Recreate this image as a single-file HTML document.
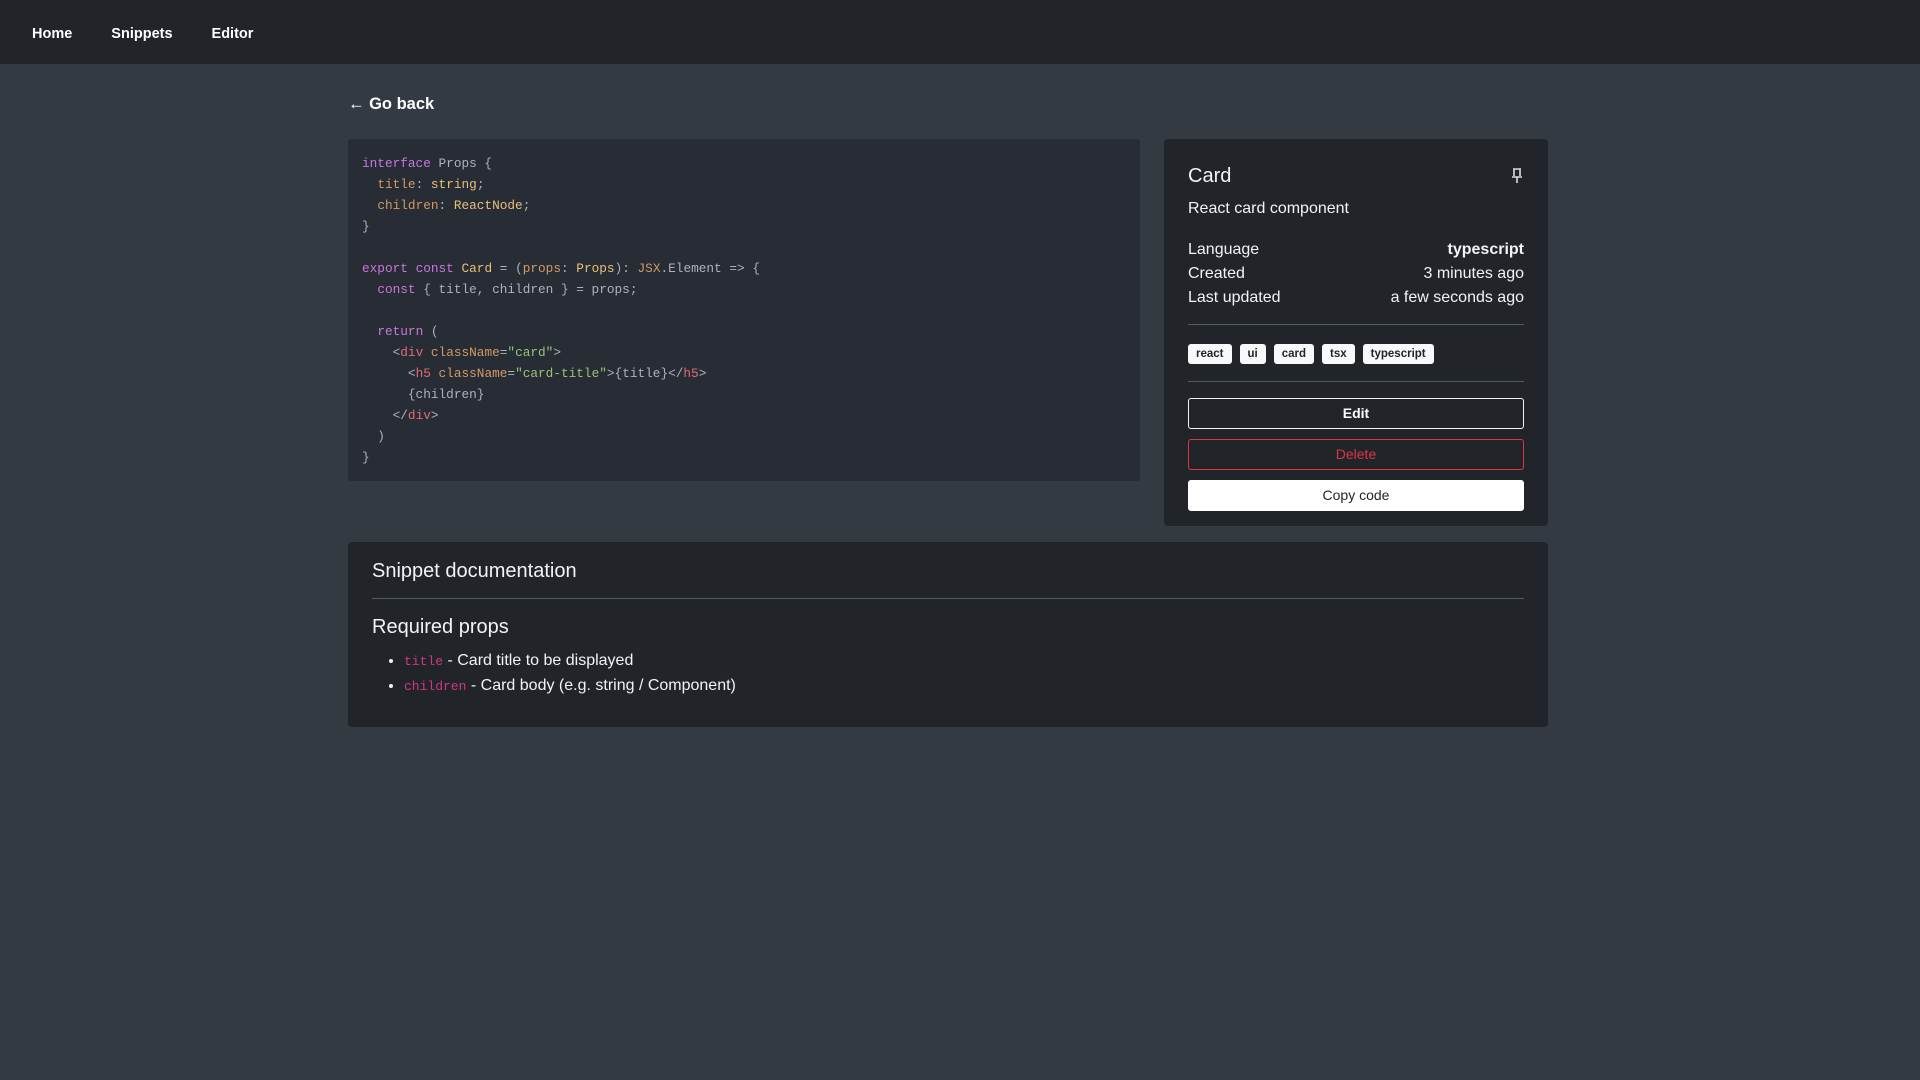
<!DOCTYPE html>
<html><head><meta charset="utf-8"><style>
*{box-sizing:border-box;margin:0;padding:0}
body{width:1920px;height:1080px;background:#343a42;font-family:"Liberation Sans",sans-serif;color:#f1f3f5;overflow:hidden}
nav{height:64px;background:#212529;display:flex;align-items:center;padding-left:32px;padding-top:4px}
nav a{color:#fff;font-weight:bold;font-size:14.5px;margin-right:39px;text-decoration:none}
.back{position:absolute;left:348px;top:95px;font-size:16.5px;font-weight:bold;color:#fff}
.code{position:absolute;left:348px;top:139px;width:792px;height:342px;background:#282c34;border-radius:3px;padding:14px 14px;font-family:"Liberation Mono",monospace;font-size:12.75px;line-height:21px;color:#abb2bf;white-space:pre}
.k{color:#c678dd}.y{color:#e5c07b}.o{color:#d19a66}.r{color:#e06c75}.g{color:#98c379}.c{color:#56b6c2}
.side{position:absolute;left:1164px;top:139px;width:384px;height:387px;background:#212529;border-radius:4px;padding:24px}
.side h2{font-size:20px;font-weight:normal;margin-top:1px;line-height:24px}
.sub{font-size:16px;margin-top:12px}
.row{display:flex;justify-content:space-between;font-size:16px;line-height:24px}
hr{border:0;border-top:1px solid #555a60}
.tags{display:flex;gap:8px;margin:19px 0 17px}
.tag{background:#f8f9fa;color:#212529;font-size:11.5px;font-weight:bold;border-radius:3px;padding:0 8px;height:20px;line-height:20px}
.btn{height:31px;border-radius:3px;text-align:center;line-height:29px;font-size:14px;margin-top:10px}
.doc{position:absolute;left:348px;top:542px;width:1200px;height:185px;background:#212529;border-radius:4px;padding:16px 24px}
.doc h2{font-size:20px;font-weight:normal;line-height:26px}
.doc h3{font-size:20px;font-weight:normal;margin-top:15px;line-height:26px}
.doc ul{margin-top:9px;padding-left:32px;font-size:16px;line-height:24px}
.doc code{font-family:"Liberation Mono",monospace;color:#d63384;font-size:13px}
</style></head><body>
<nav><a>Home</a><a>Snippets</a><a>Editor</a></nav>
<div class="back">← Go back</div>
<div class="code"><span class="k">interface</span> Props {
  <span class="o">title</span>: <span class="y">string</span>;
  <span class="o">children</span>: <span class="y">ReactNode</span>;
}

<span class="k">export</span> <span class="k">const</span> <span class="y">Card</span> = (<span class="o">props</span>: <span class="y">Props</span>): <span class="o">JSX</span>.Element =&gt; {
  <span class="k">const</span> { title, children } = props;

  <span class="k">return</span> (
    &lt;<span class="r">div</span> <span class="o">className</span>=<span class="g">"card"</span>&gt;
      &lt;<span class="r">h5</span> <span class="o">className</span>=<span class="g">"card-title"</span>&gt;{title}&lt;/<span class="r">h5</span>&gt;
      {children}
    &lt;/<span class="r">div</span>&gt;
  )
}</div>
<div class="side">
<div style="display:flex;justify-content:space-between"><h2>Card</h2>
<svg width="14" height="18" viewBox="0 0 14 18" style="margin-top:4px"><path d="M3 2h8M4 2v7M10 2v7M2 10h10M7 10v6" stroke="#ddd" stroke-width="1.6" fill="none"/></svg></div>
<div class="sub">React card component</div>
<div style="margin-top:20px">
<div class="row"><span>Language</span><b>typescript</b></div>
<div class="row"><span>Created</span><span>3 minutes ago</span></div>
<div class="row"><span>Last updated</span><span>a few seconds ago</span></div>
</div>
<hr style="margin-top:14px">
<div class="tags"><span class="tag">react</span><span class="tag">ui</span><span class="tag">card</span><span class="tag">tsx</span><span class="tag">typescript</span></div>
<hr>
<div class="btn" style="border:1px solid #f1f3f5;color:#fff;font-weight:bold;margin-top:16px">Edit</div>
<div class="btn" style="border:1px solid #dc3545;color:#dc3545">Delete</div>
<div class="btn" style="background:#fff;color:#212529;border:1px solid #fff">Copy code</div>
</div>
<div class="doc">
<h2>Snippet documentation</h2>
<hr style="margin-top:14px">
<h3>Required props</h3>
<ul><li><code>title</code> - Card title to be displayed</li><li><code>children</code> - Card body (e.g. string / Component)</li></ul>
</div>
</body></html>
